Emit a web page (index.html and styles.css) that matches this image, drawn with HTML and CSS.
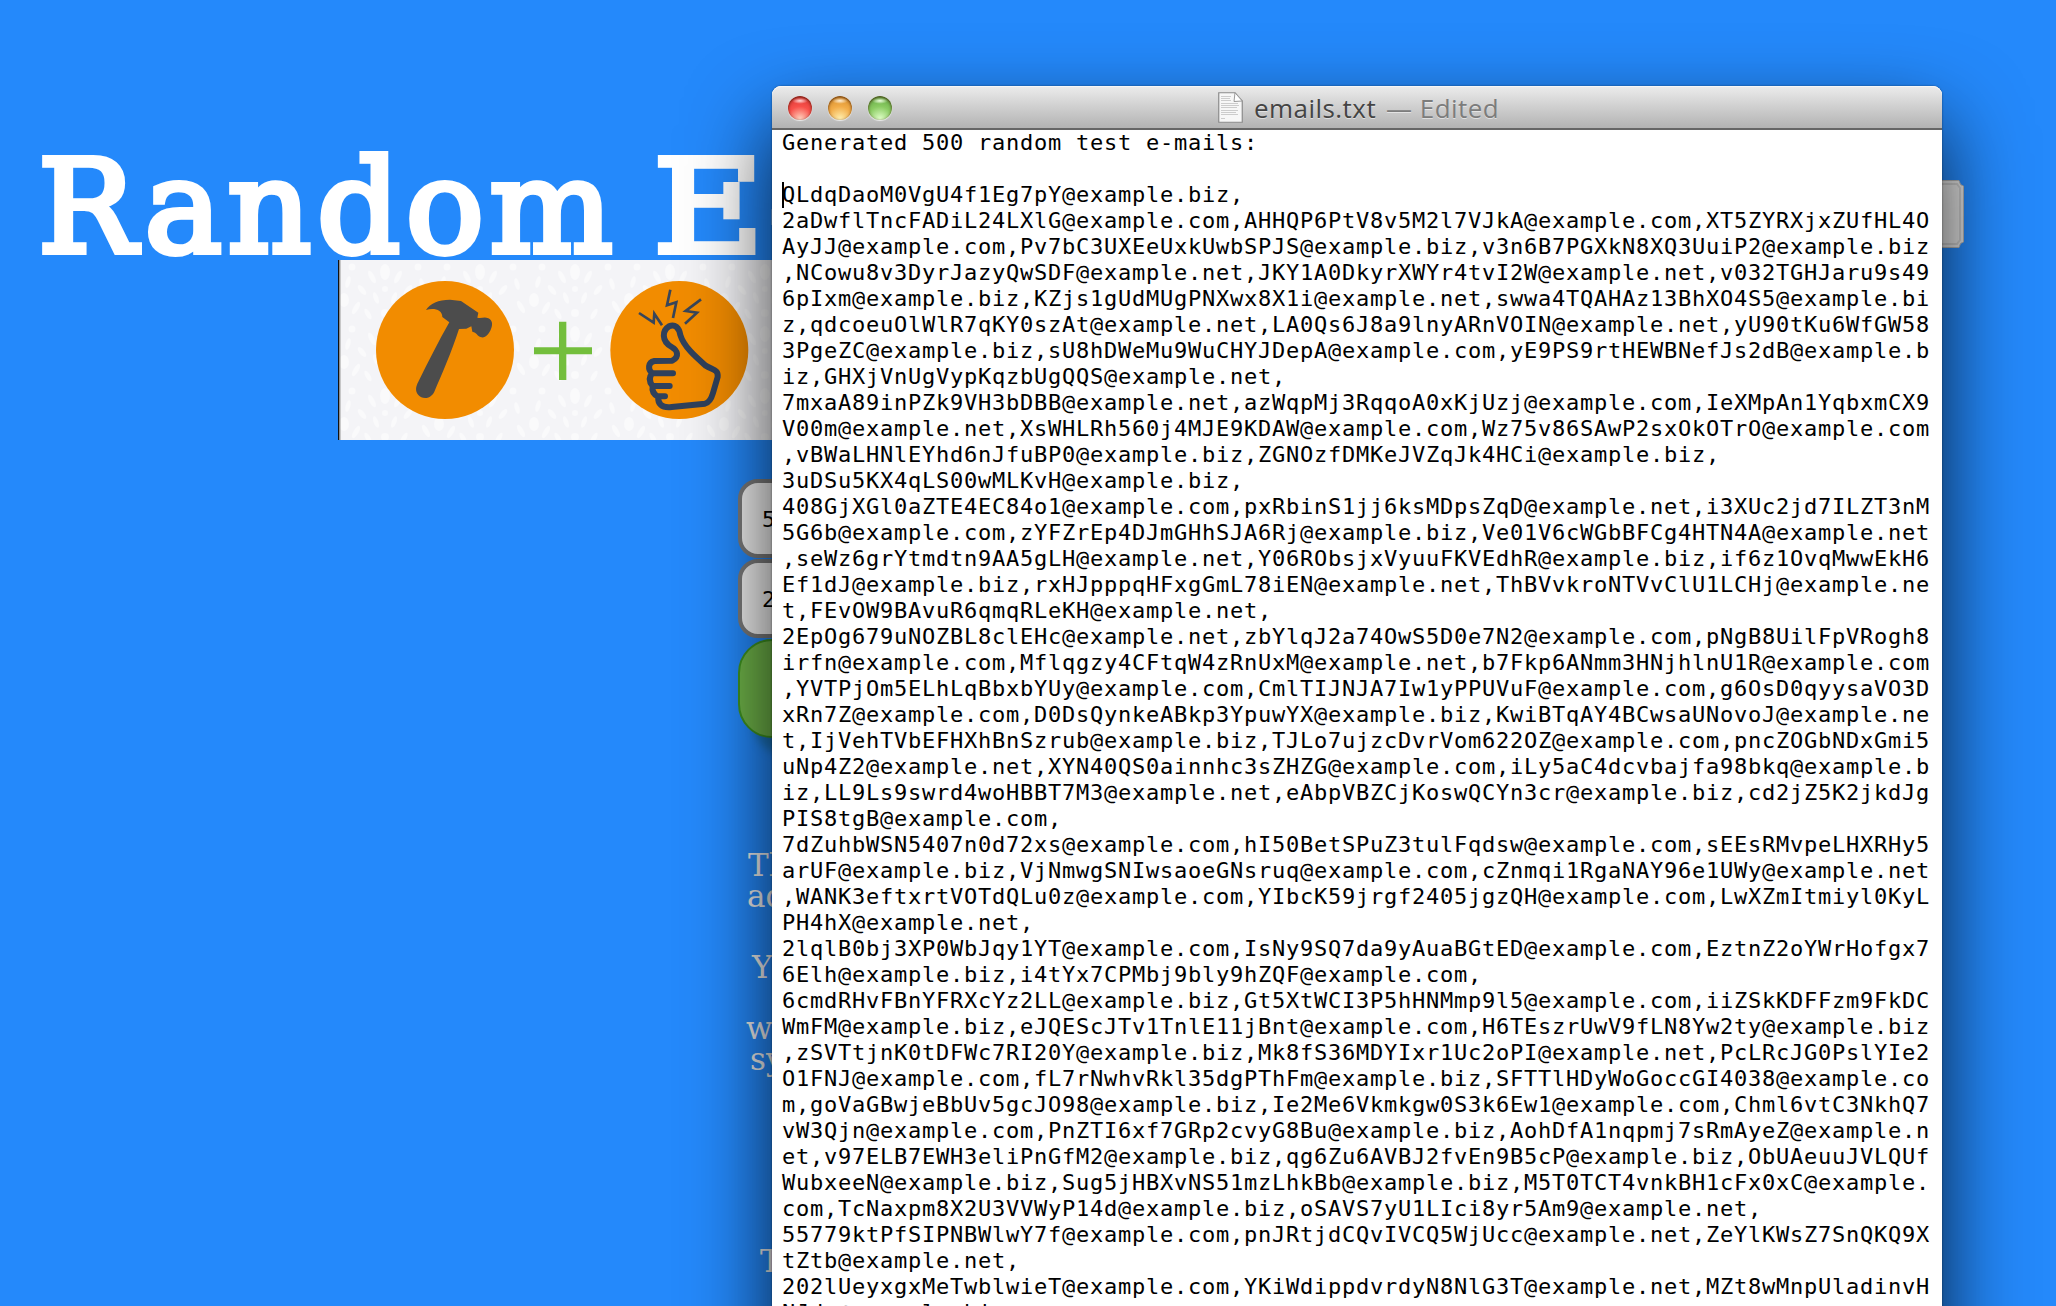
FILE: index.html
```html
<!DOCTYPE html>
<html lang="en">
<head>
<meta charset="utf-8">
<title>Random E-mails</title>
<link rel="stylesheet" href="styles.css">
</head>
<body>
<main class="page">
  <h1 class="headline">Random <span class="headline-e">E</span>-</h1>
  <div class="banner">
    <svg class="banner-art" width="434" height="180" viewBox="0 0 434 180">
      <defs>
        <pattern id="leaves" width="95" height="62" patternUnits="userSpaceOnUse">
          <g fill="#fff" opacity=".5">
            <ellipse cx="47" cy="12" rx="5" ry="8"/>
            <ellipse cx="34" cy="17" rx="2.6" ry="7" transform="rotate(-28 34 17)"/>
            <ellipse cx="60" cy="17" rx="2.6" ry="7" transform="rotate(28 60 17)"/>
            <ellipse cx="24" cy="30" rx="2.6" ry="6" transform="rotate(-40 24 30)"/>
            <ellipse cx="70" cy="30" rx="2.6" ry="6" transform="rotate(40 70 30)"/>
            <ellipse cx="6" cy="40" rx="5" ry="7"/>
            <ellipse cx="18" cy="48" rx="2.6" ry="7" transform="rotate(30 18 48)"/>
            <ellipse cx="88" cy="47" rx="2.6" ry="7" transform="rotate(-30 88 47)"/>
            <ellipse cx="38" cy="38" rx="2.4" ry="6" transform="rotate(-20 38 38)"/>
            <ellipse cx="56" cy="38" rx="2.4" ry="6" transform="rotate(20 56 38)"/>
            <ellipse cx="30" cy="54" rx="2.4" ry="6" transform="rotate(-30 30 54)"/>
            <ellipse cx="66" cy="54" rx="2.4" ry="6" transform="rotate(30 66 54)"/>
            <ellipse cx="10" cy="22" rx="2.4" ry="6" transform="rotate(15 10 22)"/>
            <ellipse cx="84" cy="24" rx="2.4" ry="6" transform="rotate(-15 84 24)"/>
            <circle cx="14" cy="7" r="3.500"/><circle cx="80" cy="7" r="3.500"/>
            <circle cx="47" cy="53" r="4"/><circle cx="47" cy="29" r="3"/>
          </g>
        </pattern>
      </defs>
      <rect width="434" height="180" fill="#f4f4f7"/>
      <rect width="434" height="180" fill="url(#leaves)"/>
      <g transform="translate(-3 -5) scale(.33333)">
        <circle cx="330" cy="285" r="207" fill="#f28c00"/>
        <circle cx="1033" cy="285" r="207" fill="#f28c00"/>
        <path fill="#4c4c4c" d="M273 165C285 145 310 134 345 134L378 138L430 173L427 188C440 192 446 184 460 190C472 196 474 208 468 222C462 238 450 250 439 247C425 243 426 232 412 230L409 214L394 221L372 222C350 290 320 360 298 410C288 432 262 434 250 420C240 408 242 395 250 380C280 320 310 260 343 202L322 186C322 165 298 158 273 165Z"/>
        <path fill="#73be3c" d="M672 200h22v77h77v21h-77v77h-22v-77h-75v-21h75z"/>
        <path fill="none" stroke="#2f415c" stroke-width="18" stroke-linejoin="round" stroke-linecap="round" d="M1014 355H952C938 345 938 322 958 318L1012 317C1034 306 1028 286 1010 276C978 258 982 226 1002 214C1020 206 1032 218 1036 240C1046 274 1080 304 1112 332C1136 346 1150 344 1148 366L1134 414Q1126 442 1110 446L1010 456C978 460 968 444 970 426C956 418 950 408 953 393C942 380 940 368 952 355M953 393H1004M968 424H990"/>
        <g fill="none" stroke="#38465a" stroke-width="8" stroke-linejoin="miter">
          <path d="M912 174L956 203L958 176L981 211"/>
          <path d="M1006 104L996 151L1024 142L1014 189"/>
          <path d="M1098 133L1052 168L1086 173L1050 206"/>
        </g>
      </g>
      <rect width="1.5" height="180" fill="#111"/>
      <rect x="1.5" width="1" height="180" fill="#999"/>
    </svg>
  </div>
  <div class="form">
    <div class="field">5</div>
    <div class="field">2</div>
    <div class="submit"></div>
  </div>
  <div class="copy">
    <p class="line first">Th</p>
    <p class="line second">ad</p>
    <p class="line third">Y</p>
    <p class="line fourth">w</p>
    <p class="line fifth">sy</p>
    <p class="line last">T</p>
  </div>
</main>
<svg class="ribbon" width="40" height="68" viewBox="0 0 40 68">
  <path d="M0 .5H34L35.500 4.500L38.500 6V62L35.500 63.500L34 67.500H0Z" fill="#e4e4e4" stroke="#b4b4b4"/>
  <path d="M0 4H32L35 8V60L32 64H0" fill="none" stroke="#ccc" stroke-width="2"/>
</svg>
<section class="window">
  <header class="titlebar">
    <div class="lights">
      <span class="light red"></span><span class="light amber"></span><span class="light green"></span>
    </div>
    <div class="title">
      <svg width="25" height="31" viewBox="0 0 25 31">
        <path d="M.75.750H17L24.250 9V30.250H.75Z" fill="#f7f7f7" stroke="#8a8a8a" stroke-width="1.200"/>
        <path d="M17 .75L16 9.500L24.250 9Z" fill="#fff" stroke="#999"/>
        <path d="M3 4.500H13M3 6.500H12M3 8.500H13M3 11.500H20M3 13.500H21M3 15.500H19M3 18.500H20M3 20.500H18M3 22.500H20M3 26.500H7" stroke="#ccc"/>
      </svg>
      <span class="name">emails.txt</span><span class="state">— Edited</span>
    </div>
  </header>
  <div class="editor"><span class="caret"></span><pre class="text">Generated 500 random test e-mails:

QLdqDaoM0VgU4f1Eg7pY@example.biz,
2aDwflTncFADiL24LXlG@example.com,AHHQP6PtV8v5M2l7VJkA@example.com,XT5ZYRXjxZUfHL4O
AyJJ@example.com,Pv7bC3UXEeUxkUwbSPJS@example.biz,v3n6B7PGXkN8XQ3UuiP2@example.biz
,NCowu8v3DyrJazyQwSDF@example.net,JKY1A0DkyrXWYr4tvI2W@example.net,v032TGHJaru9s49
6pIxm@example.biz,KZjs1gUdMUgPNXwx8X1i@example.net,swwa4TQAHAz13BhXO4S5@example.bi
z,qdcoeuOlWlR7qKY0szAt@example.net,LA0Qs6J8a9lnyARnVOIN@example.net,yU90tKu6WfGW58
3PgeZC@example.biz,sU8hDWeMu9WuCHYJDepA@example.com,yE9PS9rtHEWBNefJs2dB@example.b
iz,GHXjVnUgVypKqzbUgQQS@example.net,
7mxaA89inPZk9VH3bDBB@example.net,azWqpMj3RqqoA0xKjUzj@example.com,IeXMpAn1YqbxmCX9
V00m@example.net,XsWHLRh560j4MJE9KDAW@example.com,Wz75v86SAwP2sxOkOTrO@example.com
,vBWaLHNlEYhd6nJfuBP0@example.biz,ZGNOzfDMKeJVZqJk4HCi@example.biz,
3uDSu5KX4qLS00wMLKvH@example.biz,
408GjXGl0aZTE4EC84o1@example.com,pxRbinS1jj6ksMDpsZqD@example.net,i3XUc2jd7ILZT3nM
5G6b@example.com,zYFZrEp4DJmGHhSJA6Rj@example.biz,Ve01V6cWGbBFCg4HTN4A@example.net
,seWz6grYtmdtn9AA5gLH@example.net,Y06RObsjxVyuuFKVEdhR@example.biz,if6z1OvqMwwEkH6
Ef1dJ@example.biz,rxHJpppqHFxgGmL78iEN@example.net,ThBVvkroNTVvClU1LCHj@example.ne
t,FEvOW9BAvuR6qmqRLeKH@example.net,
2EpOg679uNOZBL8clEHc@example.net,zbYlqJ2a74OwS5D0e7N2@example.com,pNgB8UilFpVRogh8
irfn@example.com,Mflqgzy4CFtqW4zRnUxM@example.net,b7Fkp6ANmm3HNjhlnU1R@example.com
,YVTPjOm5ELhLqBbxbYUy@example.com,CmlTIJNJA7Iw1yPPUVuF@example.com,g6OsD0qyysaVO3D
xRn7Z@example.com,D0DsQynkeABkp3YpuwYX@example.biz,KwiBTqAY4BCwsaUNovoJ@example.ne
t,IjVehTVbEFHXhBnSzrub@example.biz,TJLo7ujzcDvrVom622OZ@example.com,pncZOGbNDxGmi5
uNp4Z2@example.net,XYN40QS0ainnhc3sZHZG@example.com,iLy5aC4dcvbajfa98bkq@example.b
iz,LL9Ls9swrd4woHBBT7M3@example.net,eAbpVBZCjKoswQCYn3cr@example.biz,cd2jZ5K2jkdJg
PIS8tgB@example.com,
7dZuhbWSN5407n0d72xs@example.com,hI50BetSPuZ3tulFqdsw@example.com,sEEsRMvpeLHXRHy5
arUF@example.biz,VjNmwgSNIwsaoeGNsruq@example.com,cZnmqi1RgaNAY96e1UWy@example.net
,WANK3eftxrtVOTdQLu0z@example.com,YIbcK59jrgf2405jgzQH@example.com,LwXZmItmiyl0KyL
PH4hX@example.net,
2lqlB0bj3XP0WbJqy1YT@example.com,IsNy9SQ7da9yAuaBGtED@example.com,EztnZ2oYWrHofgx7
6Elh@example.biz,i4tYx7CPMbj9bly9hZQF@example.com,
6cmdRHvFBnYFRXcYz2LL@example.biz,Gt5XtWCI3P5hHNMmp9l5@example.com,iiZSkKDFFzm9FkDC
WmFM@example.biz,eJQEScJTv1TnlE11jBnt@example.com,H6TEszrUwV9fLN8Yw2ty@example.biz
,zSVTtjnK0tDFWc7RI20Y@example.biz,Mk8fS36MDYIxr1Uc2oPI@example.net,PcLRcJG0PslYIe2
O1FNJ@example.com,fL7rNwhvRkl35dgPThFm@example.biz,SFTTlHDyWoGoccGI4038@example.co
m,goVaGBwjeBbUv5gcJO98@example.biz,Ie2Me6Vkmkgw0S3k6Ew1@example.com,Chml6vtC3NkhQ7
vW3Qjn@example.com,PnZTI6xf7GRp2cvyG8Bu@example.biz,AohDfA1nqpmj7sRmAyeZ@example.n
et,v97ELB7EWH3eliPnGfM2@example.biz,qg6Zu6AVBJ2fvEn9B5cP@example.biz,ObUAeuuJVLQUf
WubxeeN@example.biz,Sug5jHBXvNS51mzLhkBb@example.biz,M5T0TCT4vnkBH1cFx0xC@example.
com,TcNaxpm8X2U3VVWyP14d@example.biz,oSAVS7yU1LIci8yr5Am9@example.net,
55779ktPfSIPNBWlwY7f@example.com,pnJRtjdCQvIVCQ5WjUcc@example.net,ZeYlKWsZ7SnQKQ9X
tZtb@example.net,
202lUeyxgxMeTwblwieT@example.com,YKiWdippdvrdyN8NlG3T@example.net,MZt8wMnpUladinvH
NJdx@example.biz,</pre></div>
</section>
</body>
</html>
```
FILE: styles.css
```css
* { box-sizing: border-box; }

body {
  margin: 0;
  position: relative;
  width: 2056px;
  height: 1306px;
  overflow: hidden;
  background: #2489fb;
}

.page {
  display: flex;
  flex-direction: column;
  padding-top: 127px;
}

.headline {
  margin: 0;
  padding-left: 38px;
  height: 133px;
  font: 400 130px/160px "DejaVu Serif", serif;
  letter-spacing: 5.6px;
  word-spacing: -12px;
  white-space: nowrap;
  color: #fff;
  -webkit-text-stroke: 6px #fff;
  stroke-linejoin: round;
}

.headline-e {
  display: inline-block;
  margin-right: 15px;
  transform: scaleX(1.17);
  transform-origin: left;
}

.banner {
  width: 434px;
  height: 180px;
  margin-left: 338px;
}

.banner-art { display: block; }

.form {
  display: flex;
  flex-direction: column;
  gap: 1px;
  width: 600px;
  margin: 39px 0 0 738px;
}

.field {
  height: 79px;
  padding-left: 20px;
  border: 4px solid #7c7c7c;
  border-radius: 20px;
  background: #f4f4f4;
  color: #000;
  font: 22px/73px "DejaVu Sans Mono", monospace;
}

.submit {
  height: 99px;
  border: 2px solid #3f9420;
  border-radius: 34px;
  background: #70b64a;
  box-shadow: 12px 20px 8px -4px rgba(26, 110, 170, 0.8);
}

.copy {
  padding-top: 112px;
  font: 31px/31px "DejaVu Serif", serif;
  color: #f2f2f2;
}

.line { margin: 0; }
.first { padding-left: 748px; }
.second { padding-left: 747px; }
.third { padding-left: 752px; margin-top: 40px; }
.fourth { padding-left: 746px; margin-top: 30px; }
.fifth { padding-left: 750px; }
.last { padding-left: 760px; margin-top: 171px; }

.ribbon {
  position: absolute;
  left: 1925px;
  top: 180px;
}

/* Text editor window floating over the page */
.window {
  position: absolute;
  left: 772px;
  top: 86px;
  width: 1170px;
  height: 1400px;
  border-radius: 9px 9px 0 0;
  background: #fff;
  box-shadow: 0 0 2px rgba(0, 0, 0, 0.5), 0 38px 84px rgba(0, 0, 0, 0.8);
}

.titlebar {
  display: flex;
  align-items: center;
  height: 44px;
  padding: 0 16px;
  border-bottom: 2px solid #666;
  border-radius: 9px 9px 0 0;
  background: linear-gradient(#ececec, #d2d2d2 45%, #b3b3b3);
  box-shadow: inset 0 1px 0 #f6f6f6;
}

.lights { display: flex; gap: 16px; padding-top: 2px; }

.light {
  width: 24px;
  height: 24px;
  border-radius: 50%;
  box-shadow: inset 0 1px 3px rgba(60, 20, 0, 0.8), 0 1px 1px rgba(255, 255, 255, 0.7);
}

.red { background: radial-gradient(ellipse 8px 3px at 50% 20%, #ffd8d8, transparent), radial-gradient(circle at 50% 95%, #ffd2be, #f8504a 48%, #d43230); }
.amber { background: radial-gradient(ellipse 8px 3px at 50% 20%, #fff0d8, transparent), radial-gradient(circle at 50% 95%, #fff0b0, #f2ac48 48%, #cf8828); }
.green { background: radial-gradient(ellipse 8px 3px at 50% 20%, #eeffe0, transparent), radial-gradient(circle at 50% 95%, #e0ffc8, #8acb62 48%, #5ba03e); }

.title {
  display: flex;
  align-items: center;
  margin-left: 326px;
  font: 26px/36px "Open Sans", sans-serif;
  letter-spacing: 0.45px;
  color: #444;
  white-space: nowrap;
  text-shadow: 0 1px 0 rgba(255, 255, 255, 0.5);
}

.name { margin-left: 11px; padding-top: 1px; }
.state { margin-left: 10px; padding-top: 1px; color: #7c7c7c; }

.editor { position: relative; padding-left: 10px; }

.caret {
  position: absolute;
  left: 10px;
  top: 52px;
  width: 2px;
  height: 26px;
  background: #000;
}

.text {
  margin: 0;
  font: 22px/26px "DejaVu Sans Mono", monospace;
  letter-spacing: 0.755px;
  color: #000;
}
```
